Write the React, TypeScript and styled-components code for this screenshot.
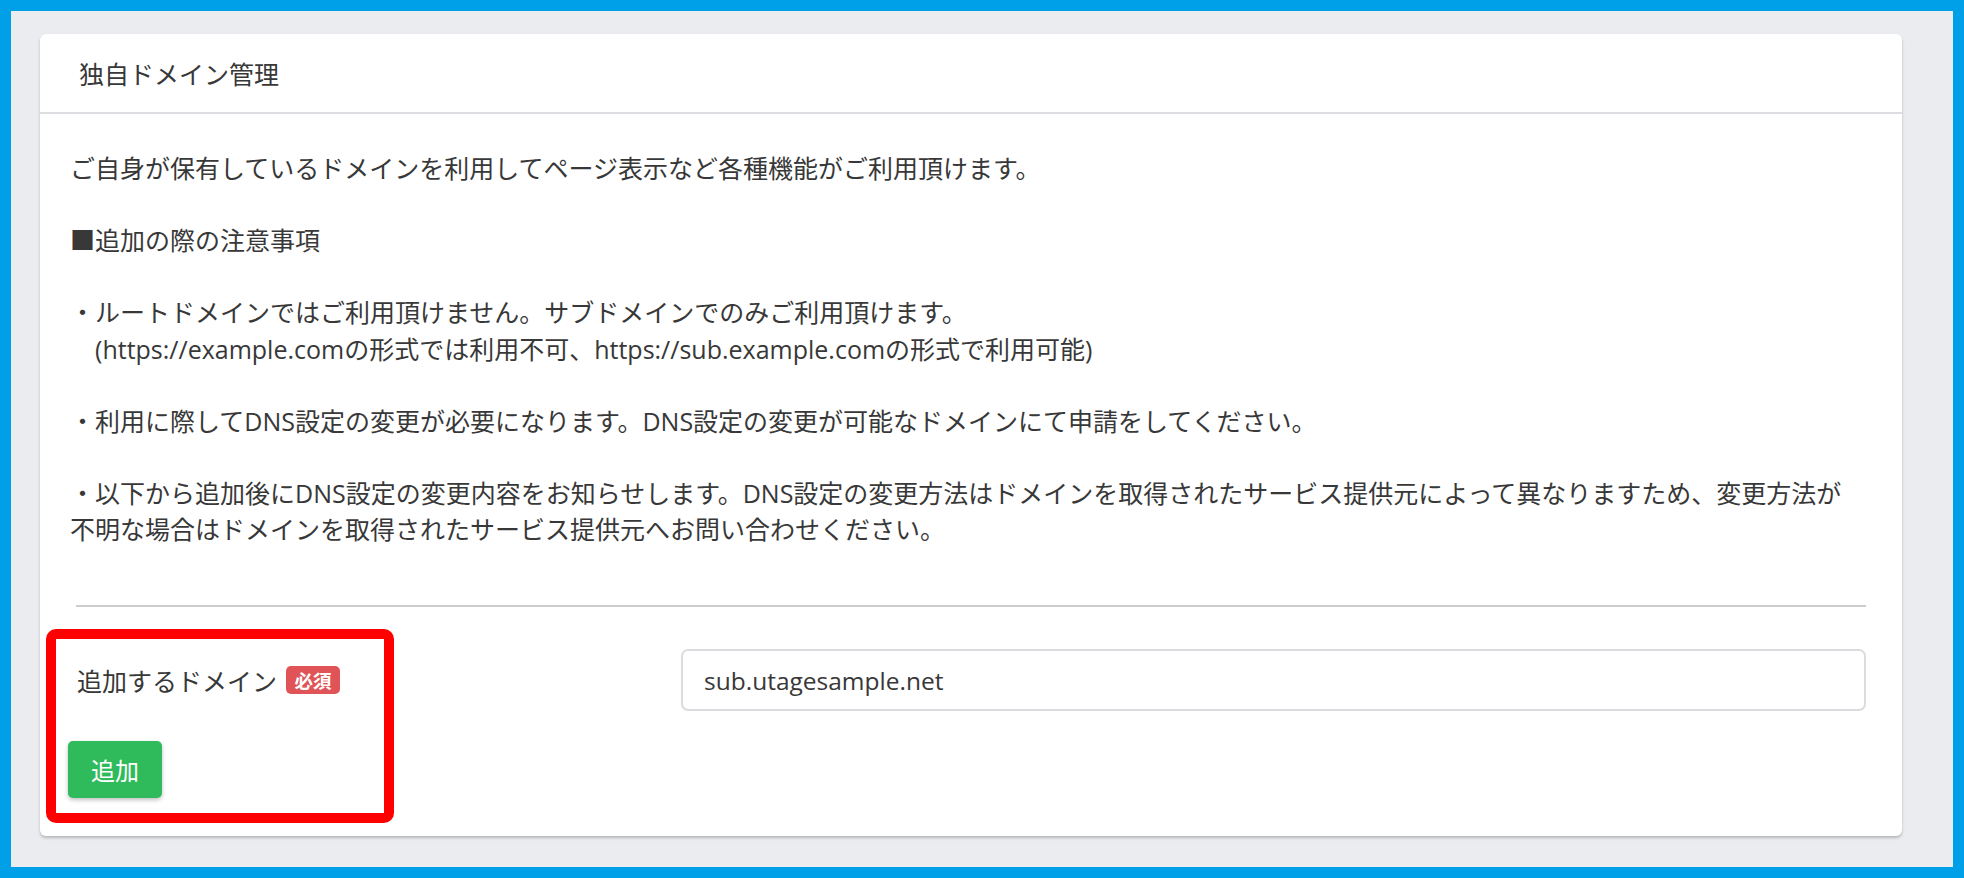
import React from "react";
import styled, { createGlobalStyle } from "styled-components";

const GlobalStyle = createGlobalStyle`
  html, body {
    margin: 0;
    padding: 0;
    background: #00a0e9;
  }
  body {
    font-family: "Open Sans", "Noto Sans CJK JP", sans-serif;
    color: #383838;
  }
`;

const App = () => {
  return (
    <>
      <GlobalStyle />
      <Frame>
        <Page>
          <Card>
            <CardHeader>
              <CardTitle>独自ドメイン管理</CardTitle>
            </CardHeader>
            <CardBody>
              <Notice>
                <p>ご自身が保有しているドメインを利用してページ表示など各種機能がご利用頂けます。</p>
                <p>■追加の際の注意事項</p>
                <p>
                  ・ルートドメインではご利用頂けません。サブドメインでのみご利用頂けます。
                  <br />
                  {"\u3000"}(https://example.comの形式では利用不可、https://sub.example.comの形式で利用可能)
                </p>
                <p>・利用に際してDNS設定の変更が必要になります。DNS設定の変更が可能なドメインにて申請をしてください。</p>
                <p>
                  ・以下から追加後にDNS設定の変更内容をお知らせします。DNS設定の変更方法はドメインを取得されたサービス提供元によって異なりますため、変更方法が不明な場合はドメインを取得されたサービス提供元へお問い合わせください。
                </p>
              </Notice>
              <Divider />
              <FormRow>
                <Label>
                  追加するドメイン
                  <RequiredBadge>必須</RequiredBadge>
                </Label>
                <TextInput defaultValue="sub.utagesample.net" />
              </FormRow>
              <SubmitButton>追加</SubmitButton>
              <Highlight />
            </CardBody>
          </Card>
        </Page>
      </Frame>
    </>
  );
};

export default App;

const Frame = styled.div`
  height: 878px;
  box-sizing: border-box;
  padding: 11px;
`;

const Page = styled.div`
  height: 100%;
  box-sizing: border-box;
  background: #ebecef;
  padding: 23px 51px 30px 29px;
`;

const Card = styled.section`
  background: #ffffff;
  border-radius: 6px;
  box-shadow: 0 2px 3px rgba(0, 0, 0, 0.22);
`;

const CardHeader = styled.header`
  height: 80px;
  box-sizing: border-box;
  display: flex;
  align-items: center;
  padding-left: 39px;
  border-bottom: 2px solid #dcdce1;
`;

const CardTitle = styled.h1`
  margin: 0;
  font-size: 25px;
  font-weight: 400;
  color: #383838;
`;

const CardBody = styled.div`
  position: relative;
  padding: 36px 32px 38px 30px;
`;

const Notice = styled.div`
  padding-right: 10px;
  font-size: 25px;
  line-height: 36.5px;

  p {
    margin: 0 0 35.5px;
  }

  p:last-child {
    margin-bottom: 0;
  }
`;

const Divider = styled.hr`
  margin: 57.5px 4px 0 6px;
  border: 0;
  border-top: 2px solid #cccccf;
`;

const FormRow = styled.div`
  display: grid;
  grid-template-columns: 605px 1fr;
  align-items: center;
  margin: 42px 4px 0 6px;
`;

const Label = styled.label`
  display: flex;
  align-items: center;
  padding-left: 1px;
  font-size: 25px;
  color: #383838;
`;

const RequiredBadge = styled.span`
  margin-left: 9px;
  width: 54px;
  height: 28px;
  display: inline-flex;
  align-items: center;
  justify-content: center;
  border-radius: 5px;
  background: #e05458;
  color: #ffffff;
  font-size: 18.5px;
  font-weight: 700;
`;

const TextInput = styled.input`
  height: 62px;
  box-sizing: border-box;
  width: 100%;
  padding: 0 21px;
  border: 2px solid #dcdce0;
  border-radius: 7px;
  font-family: "Open Sans", sans-serif;
  font-size: 24.5px;
  color: #383838;
  outline: none;
`;

const SubmitButton = styled.button`
  display: block;
  margin: 30px 0 0 -2px;
  height: 57px;
  padding: 0 23px;
  border: none;
  border-radius: 5px;
  background: #2fba5c;
  color: #ffffff;
  font-family: "Noto Sans CJK JP", sans-serif;
  font-size: 24px;
  box-shadow: 0 2px 4px rgba(0, 0, 0, 0.25);
  cursor: pointer;
`;

const Highlight = styled.div`
  position: absolute;
  left: 6px;
  bottom: 13px;
  width: 348px;
  height: 194px;
  box-sizing: border-box;
  border: 10.5px solid #ff0000;
  border-radius: 10px;
  pointer-events: none;
`;
